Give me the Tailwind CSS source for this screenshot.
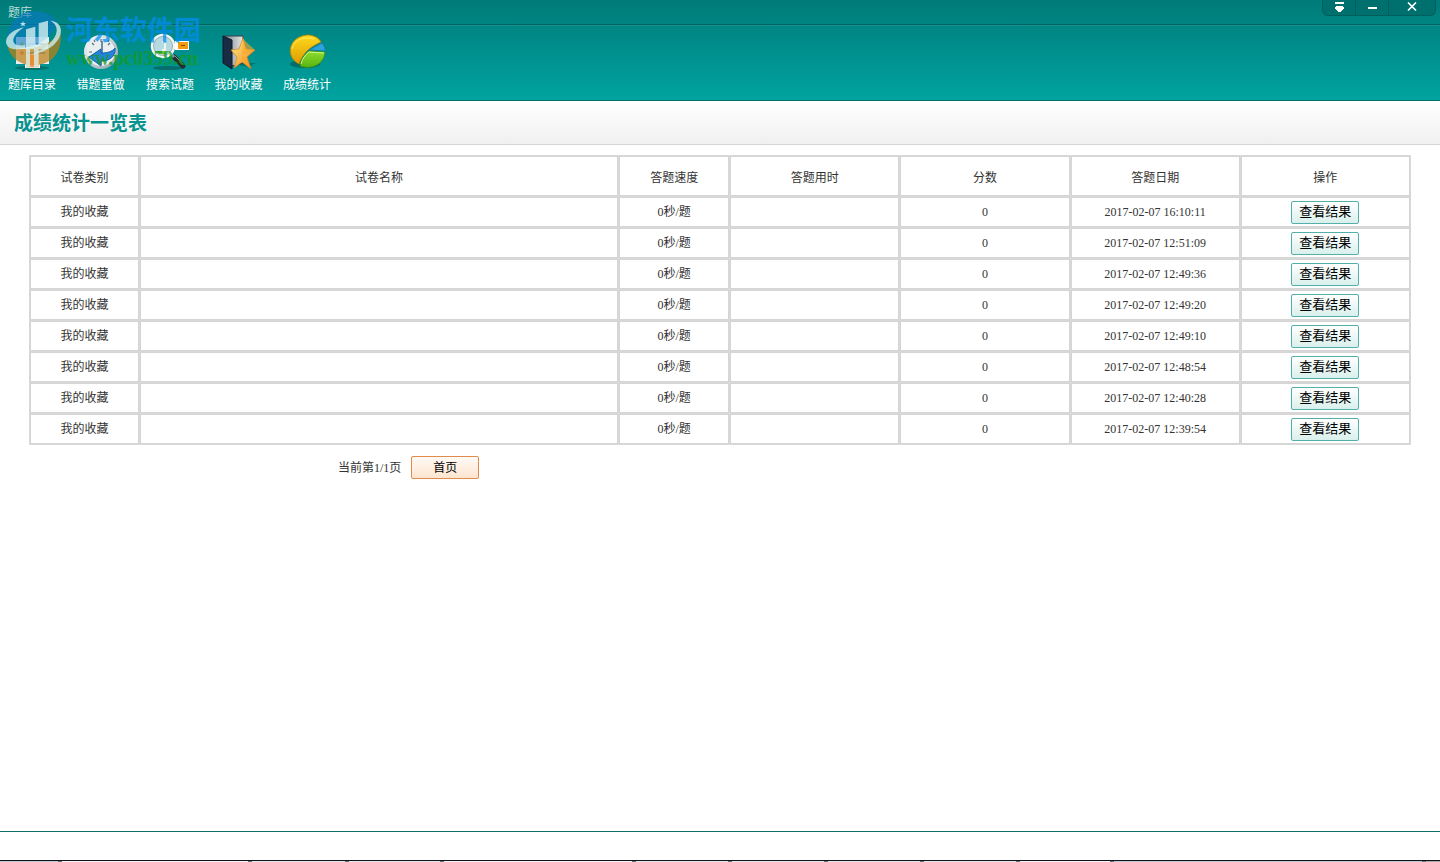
<!DOCTYPE html>
<html lang="zh-CN">
<head>
<meta charset="utf-8">
<meta name="viewport" content="width=device-width, initial-scale=1">
<title>题库</title>
<script src="https://cdn.jsdelivr.net/npm/@tailwindcss/browser@4"></script>
</head>
<body class="relative flex min-h-screen flex-col bg-white font-['Liberation_Serif','Noto_Sans_CJK_SC',serif] text-xs text-[#333]">
<header class="bg-linear-to-b from-[#007b79] to-[#00a3a0] border-b border-[#086e6c]">
  <div class="flex h-[25px] items-start justify-between border-b border-[#006463]">
    <span class="pl-2 leading-[26px] text-[#b9dcda]">题库</span>
    <div class="mr-1 flex h-4 w-[114px] overflow-hidden rounded-b-md border border-t-0 border-[#005f5d] bg-[#00706e]">
      <button type="button" aria-label="菜单" class="flex w-[33px] justify-center border-r border-[#005f5d]">
        <svg width="9" height="12" viewBox="0 0 9 12" fill="#fff" shape-rendering="crispEdges"><path d="M0 2h9v2H0zM1 6h7v1h1v2H8v1H7v1H6v1H3v-1H2v-1H1V9H0V7h1z"/></svg>
      </button>
      <button type="button" aria-label="最小化" class="flex w-[33px] justify-center border-r border-[#005f5d]">
        <svg width="9" height="12" viewBox="0 0 9 12" fill="#fff" shape-rendering="crispEdges"><path d="M0 7h9v2H0z"/></svg>
      </button>
      <button type="button" aria-label="关闭" class="flex flex-1 justify-center">
        <svg width="10" height="12" viewBox="0 0 10 12" fill="none" stroke="#fff" stroke-width="1.7"><path d="M1 2.5 9 10.500M9 2.500 1 10.500"/></svg>
      </button>
    </div>
  </div>
  <nav class="flex h-[75px] border-t border-[#168f8d] pt-[7px] text-white">
    <a href="#" class="flex w-16 flex-col items-center">
      <svg class="h-[38px] w-[38px]" viewBox="0 0 38 38"><ellipse cx="19" cy="35" rx="17" ry="2" fill="#005c5a" opacity=".6"/><path d="M3 4h33v27H3z" fill="#e9eef2"/><path d="M12 31h15v4H12z" fill="#f4f7fa"/><circle cx="9" cy="11" r="2" fill="#f4d451"/><circle cx="9" cy="20" r="2" fill="#e78391"/><path d="M13 10h19v2H13zM13 19h19v2H13z" fill="#6ba9d3"/></svg>
      <span class="leading-7">题库目录</span>
    </a>
    <a href="#" class="flex w-[73px] flex-col items-center">
      <svg class="h-[38px] w-[38px]" viewBox="0 0 38 38"><defs><linearGradient id="rim" x2="1" y2="1"><stop stop-color="#fff"/><stop offset="1" stop-color="#8d9da7"/></linearGradient></defs><circle cx="19" cy="19" r="17" fill="url(#rim)"/><circle cx="19" cy="19" r="14" fill="#e9eef1"/><path d="M19 6v3M7 19h3M29 19h2M10 10l2 2M28 10l-2 2M19 29v3M12 7l1 2M27 7l-1 2" stroke="#59727c" stroke-width="1.2"/><path d="M20 8v12" stroke="#4a6a80" stroke-width="1.5"/><path d="M7 24 19 16v4c6 0 11-1 14-5 1 8-5 13-14 13v5z" fill="#2584d8" stroke="#0f62b0"/></svg>
      <span class="leading-7">错题重做</span>
    </a>
    <a href="#" class="flex w-[66px] flex-col items-center">
      <svg class="h-[38px] w-[40px]" viewBox="0 0 40 38"><ellipse cx="18" cy="35" rx="15" ry="2" fill="#085d5b" opacity=".7"/><path d="M25 8h14v9H25z" fill="#fff"/><path d="M28 9h10v7H28z" fill="#f39a12"/><path d="M31 12h4v1h-4z" fill="#854b08"/><path d="m24 24 9 9" stroke="#252c31" stroke-width="5" stroke-linecap="round"/><path d="m20 20 4 4" stroke="#8b989b" stroke-width="3"/><path d="m25 23 8 8" stroke="#8b989b"/><circle cx="13" cy="13" r="11" fill="#b5dadf" stroke="#f4f6f7" stroke-width="2.500"/><circle cx="13" cy="13" r="9.500" fill="none" stroke="#9fb0b5"/><path d="M12 9h3v8h-3" fill="none" stroke="#fff" stroke-width="1.500"/><path d="M7 18h9v3H9z" fill="#61bc35"/></svg>
      <span class="leading-7">搜索试题</span>
    </a>
    <a href="#" class="flex w-[71px] flex-col items-center">
      <svg class="h-[38px] w-[38px]" viewBox="0 0 38 38"><defs><linearGradient id="star" x2="1" y2="1"><stop stop-color="#fff089"/><stop offset="1" stop-color="#ef8114"/></linearGradient><linearGradient id="page"><stop stop-color="#777f86"/><stop offset="1" stop-color="#e4e7e9"/></linearGradient></defs><path d="M12 30h24l-8 4z" fill="#004f4e" opacity=".5"/><path d="M3 3h20v27l-11 3z" fill="url(#page)" stroke="#353d46"/><path d="m3 3 9 4v29l-9-6z" fill="#192c44" stroke="#0a1a2b"/><path d="m23 5 3 11 9 1-8 7 4 12-9-7-8 6 3-11-6-7 8-1z" fill="url(#star)" stroke="#d28219" stroke-width=".7"/><path d="m23 6-1 16 13-5zM22 22l9 13-9-7z" fill="#f9a928" opacity=".6"/></svg>
      <span class="leading-7">我的收藏</span>
    </a>
    <a href="#" class="flex w-[66px] flex-col items-center">
      <svg class="h-[38px] w-[38px]" viewBox="0 0 38 38"><defs><linearGradient id="gold" y2="1" x2="0"><stop stop-color="#ffd91f"/><stop offset="1" stop-color="#dd9c00"/></linearGradient><linearGradient id="green" x2="0" y2="1"><stop stop-color="#8fdc2c"/><stop offset="1" stop-color="#58b512"/></linearGradient></defs><ellipse cx="17" cy="31" rx="15" ry="4" fill="#07534e" opacity=".6"/><path d="M11 31C-3 24 0 4 19 2c6 0 11 2 14 7-6 3-10 5-13 8-4 4-7 8-9 14z" fill="url(#gold)" stroke="#b98300" stroke-width=".8"/><path d="M4 16C6 7 15 3 27 6" fill="none" stroke="#fff27c" opacity=".7"/><path d="m21 17 13-7q4 4 3 8z" fill="#2ba3dc" stroke="#1277a6" stroke-width=".8"/><path d="m21 18 16 1c-1 13-14 18-25 14 1-6 4-11 9-15z" fill="url(#green)" stroke="#3b940d" stroke-width=".8"/><path d="m21 19 15 1M21 19c-4 3-7 7-8 12" fill="none" stroke="#d5f98a"/></svg>
      <span class="leading-7">成绩统计</span>
    </a>
  </nav>
</header>

<!-- Site watermark over the toolbar -->
<div class="pointer-events-none absolute left-0 top-2 flex items-start" aria-hidden="true">
  <svg class="h-[66px] w-[66px] shrink-0" viewBox="0 0 198 198">
    <path d="M20 100C22 45 55 10 104 10c30 0 55 12 70 36-20 50-80 85-150 72z" fill="#0879c4" opacity=".62"/>
    <path d="M22 115c55 22 130-5 160-40 6 60-30 97-82 97-40 0-68-22-78-57z" fill="#bd7f14" opacity=".72"/>
    <path d="M78 138h38v40H78z" fill="#e98a2c" opacity=".75"/>
    <path d="M72 58C35 65 10 90 21 112c7 14 30 14 54 8v-9c-15 3-27 2-33-6-8-12 6-32 30-47zM150 38c42 3 42 45 10 74-20 16-45 26-70 29 50-19 78-47 80-72 1-14-6-25-20-31z" fill="#c9e8e4" opacity=".85"/>
    <path d="M78 64l28-8v46c0 10 8 12 10 2V46l28-8v85h-28v55h-14v-54H90v54H78z" fill="#d9f1ef" opacity=".78"/>
    <path d="m69 39 2 6h7l-5 4 2 6-6-3-6 3 2-6-5-4h7z" fill="#b9e0ee"/>
  </svg>
  <div class="whitespace-nowrap pt-1 font-bold">
    <div class="font-['Noto_Sans_CJK_SC',sans-serif] text-[27px] leading-[34px] text-[#008ef0]/75">河东软件园</div>
    <div class="font-['Liberation_Serif',serif] text-[20px] leading-6 text-[#149a1c]/75">www.pc0359.cn</div>
  </div>
</div>

<section class="h-11 border-b border-[#d5d5d5] bg-linear-to-b from-white to-[#f0f0f0] pl-3.5">
  <h1 class="text-[19px] font-bold leading-[45px] text-[#089390]">成绩统计一览表</h1>
</section>

<main class="flex-1 px-[29px] pt-2.5">
  <table class="w-full table-fixed border-separate border-spacing-px bg-[#d8d8d8] text-center leading-4 [&_td]:border [&_td]:border-[#d5d5d5] [&_td]:bg-white [&_td]:p-0 [&_th]:border [&_th]:border-[#d5d5d5] [&_th]:bg-white [&_th]:p-0 [&_th]:pt-[3px] [&_th]:font-normal">
    <colgroup><col class="w-[109px]"><col class="w-[34.8%]"><col class="w-[110px]"><col><col><col><col></colgroup>
    <thead><tr class="h-10"><th scope="col">试卷类别</th><th scope="col">试卷名称</th><th scope="col">答题速度</th><th scope="col">答题用时</th><th scope="col">分数</th><th scope="col">答题日期</th><th scope="col">操作</th></tr></thead>
    <tbody id="rows"></tbody>
  </table>
  <div class="mt-[11px] flex items-center gap-2.5 pl-[309px]">
    <span>当前第1/1页</span>
    <button type="button" class="h-[23px] w-[68px] rounded-xs border border-[#e08b49] bg-linear-to-b from-[#fffaf5] to-[#fde5d0] text-black">首页</button>
  </div>
</main>

<footer class="border-t border-[#0f6f6a]">
  <div class="h-7"></div>
  <div class="flex h-0.5 gap-1 border-t border-[#111318] bg-[#66717c]">
    <i class="w-[58px] bg-[#b9c9d6]"></i><i class="flex-[186] bg-[#f4f2f8]"></i><i class="flex-[93] bg-[#e3e8ef]"></i><i class="flex-[92] bg-[#e3e8ef]"></i><i class="flex-[188] bg-[#f4f2f8]"></i><i class="flex-[92] bg-[#e3e8ef]"></i><i class="flex-[92] bg-[#e3e8ef]"></i><i class="flex-[92] bg-[#e3e8ef]"></i><i class="flex-[92] bg-[#e3e8ef]"></i><i class="flex-[91] bg-[#f4f2f8]"></i><i class="flex-[308] bg-[#b9c9d6]"></i><i class="w-3.5 bg-[#aaa]"></i>
  </div>
</footer>
<script>
const dates = ['16:10:11','12:51:09','12:49:36','12:49:20','12:49:10','12:48:54','12:40:28','12:39:54'];
document.getElementById('rows').innerHTML = dates.map(t => `<tr class="h-[30px]"><td>我的收藏</td><td></td><td>0秒/题</td><td></td><td>0</td><td>2017-02-07 ${t}</td><td><button type="button" class="block mx-auto h-[23px] w-[68px] rounded-xs border border-[#52afa9] bg-linear-to-b from-white to-[#d9f0ec] text-[13px] text-black">查看结果</button></td></tr>`).join('');
</script>
</body>
</html>
